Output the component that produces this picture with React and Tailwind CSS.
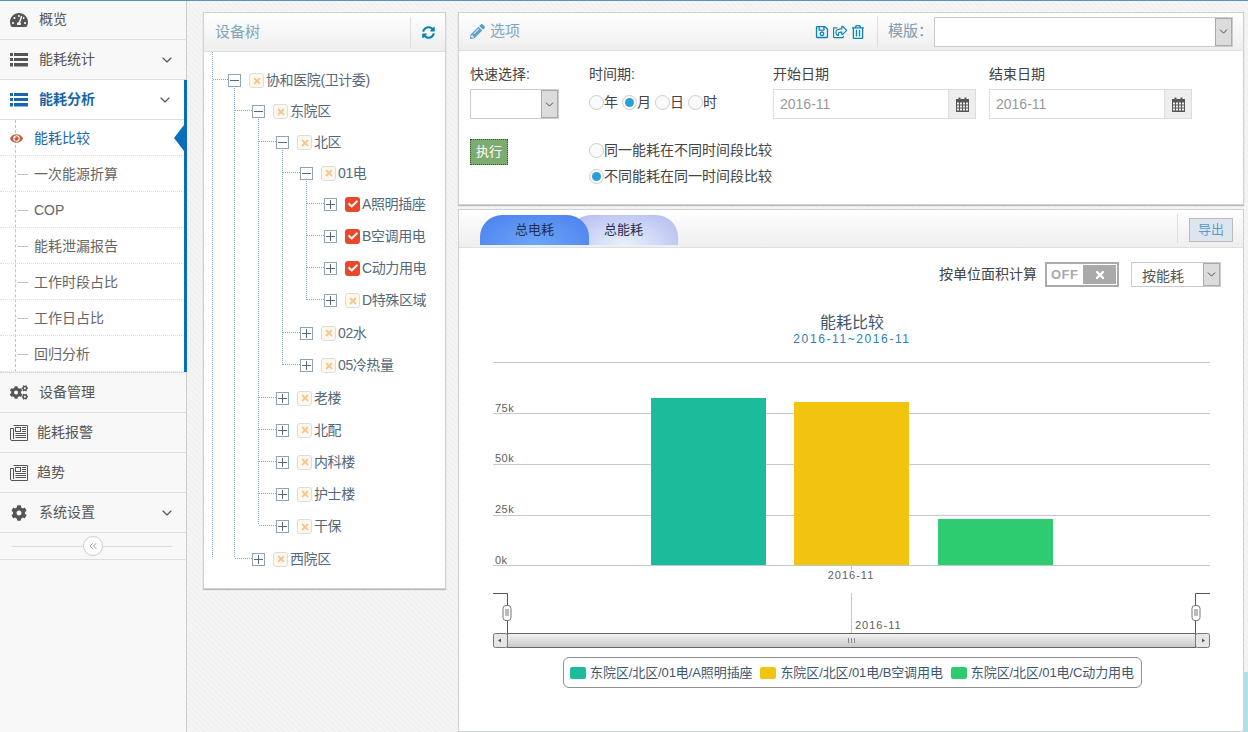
import React from "react";
import {
  FaTachometerAlt, FaCogs, FaCog, FaPencilAlt, FaSyncAlt,
  FaRegSave, FaRegShareSquare, FaRegTrashAlt, FaEye, FaTimes, FaCheck,
} from "react-icons/fa";
import { ChevronDown, ChevronsLeft } from "lucide-react";

const font = "font-['Liberation_Sans','Noto_Sans_CJK_SC',sans-serif]";

function ListIcon() {
  return (
    <svg width="18" height="14" viewBox="0 0 18 14" fill="currentColor">
      <path d="M0 0h3v3H0zM4 0h14v3H4zM0 5h3v3H0zM4 5h14v3H4zM0 10h3v3.5H0zM4 10h14v3.5H4z" />
    </svg>
  );
}

function NewsIcon() {
  return (
    <svg width="18" height="18" viewBox="0 0 18 18" fill="none" stroke="currentColor" strokeWidth="1">
      <path d="M3.5 1.5h14v15H2a1.5 1.5 0 0 1-1.5-1.5V4.5h3V15" />
      <rect x="5.5" y="3.5" width="5" height="4" />
      <path d="M12 3.5h4M12 5.5h4M12 7.5h4M5.5 9.5h10.5M5.5 11.5h10.5M5.5 13.5h10.5" />
    </svg>
  );
}

function CalendarIcon() {
  return (
    <svg width="13" height="15" viewBox="0 0 13 15">
      <path d="M0 2h2.5V0.5h2V2h4V0.5h2V2H13v13H0z" fill="#555" />
      <path d="M1 5.5h2v2H1zM4 5.5h2v2H4zM7 5.5h2v2H7zM10 5.5h2v2h-2zM1 8.5h2v2H1zM4 8.5h2v2H4zM7 8.5h2v2H7zM10 8.5h2v2h-2zM1 11.5h2v2H1zM4 11.5h2v2H4zM7 11.5h2v2H7zM10 11.5h2v2h-2z" fill="#eee" />
    </svg>
  );
}

function NavItem({ icon, label, chevron, active, textClass = "ml-[11px]" }) {
  return (
    <div className={`flex h-10 items-center border-b border-[#ddd] pl-[10px] pr-[11px] ${active ? "bg-white text-[#1a66a8] font-bold" : "text-[#555]"}`}>
      <span className="flex w-[18px] justify-center">{icon}</span>
      <span className={`${textClass} flex-1 text-[14px]`}>{label}</span>
      {chevron && <ChevronDown size={16} strokeWidth={1.75} className="text-[#555]" />}
    </div>
  );
}

function SubItem({ label, active }) {
  return (
    <div className="flex h-9 items-center border-b border-dotted border-[#ddd] pl-[34px] pt-[2px] relative">
      {active ? (
        <FaEye className="absolute left-[10px] text-[13px] text-[#c0603f]" />
      ) : (
        <span className="absolute left-[18px] w-[10px] border-t border-dashed border-[#bbb]" />
      )}
      <span className={`text-[14px] ${active ? "text-[#1a66a8]" : "text-[#666]"}`}>{label}</span>
    </div>
  );
}

function Sidebar() {
  return (
    <aside className="w-[187px] shrink-0 bg-[#f8f8f8] border-r border-[#ccc] h-[733px] -mt-px">
      <NavItem icon={<FaTachometerAlt className="text-[18px]" />} label="概览" />
      <NavItem icon={<ListIcon />} label="能耗统计" chevron />
      <div className="border-r-[3px] border-[#0a6ebd] -mr-px relative">
        <NavItem active icon={<ListIcon />} label="能耗分析" chevron />
        <div className="bg-white relative">
          <span className="absolute left-[15px] top-0 bottom-0 border-l border-dashed border-[#b8c4d0]" />
          <span className="absolute right-0 top-[5px] w-0 h-0 border-y-[13px] border-y-transparent border-r-[10px] border-r-[#0a6ebd]" />
          <SubItem active label="能耗比较" />
          <SubItem label="一次能源折算" />
          <SubItem label="COP" />
          <SubItem label="能耗泄漏报告" />
          <SubItem label="工作时段占比" />
          <SubItem label="工作日占比" />
          <SubItem label="回归分析" />
        </div>
      </div>
      <div className="border-t border-[#ddd]">
        <NavItem icon={<FaCogs className="text-[19px]" />} label="设备管理" />
        <NavItem icon={<NewsIcon />} label="能耗报警" textClass="ml-[9px]" />
        <NavItem icon={<NewsIcon />} label="趋势" textClass="ml-[9px]" />
        <NavItem icon={<FaCog className="text-[16px]" />} label="系统设置" chevron />
      </div>
      <div className="relative flex h-[27px] items-center justify-center border-b border-[#ddd]">
        <span className="absolute left-3 right-[14px] border-t border-[#ddd]" />
        <span className="relative flex h-5 w-5 items-center justify-center rounded-full border border-[#ccc] bg-white text-[#999]">
          <ChevronsLeft size={12} />
        </span>
      </div>
    </aside>
  );
}

const treeRows = [
  { d: 0, t: "协和医院(卫计委)", open: true, h: "h-[31px]" },
  { d: 1, t: "东院区", open: true, h: "h-[31px]" },
  { d: 2, t: "北区", open: true, h: "h-[31px]" },
  { d: 3, t: "01电", open: true, h: "h-[30px]" },
  { d: 4, t: "A照明插座", c: true, h: "h-[32px]" },
  { d: 4, t: "B空调用电", c: true, h: "h-[32px]" },
  { d: 4, t: "C动力用电", c: true, h: "h-[32px]" },
  { d: 4, t: "D特殊区域", h: "h-[33px]" },
  { d: 3, t: "02水", h: "h-[32px]" },
  { d: 3, t: "05冷热量", h: "h-[33px]" },
  { d: 2, t: "老楼", h: "h-[32px]" },
  { d: 2, t: "北配", h: "h-[32px]" },
  { d: 2, t: "内科楼", h: "h-[32px]" },
  { d: 2, t: "护士楼", h: "h-[32px]" },
  { d: 2, t: "干保", h: "h-[33px]" },
  { d: 1, t: "西院区", h: "h-[32px]" },
];
const indent = ["pl-[24px]", "pl-[48px]", "pl-[72px]", "pl-[96px]", "pl-[120px]"];

function TreeRow({ r }) {
  return (
    <div className={`flex items-center ${r.h} ${indent[r.d]}`}>
      <span className="relative z-10 h-[13px] w-[13px] shrink-0 border border-[#8fa3b0] bg-white flex items-center justify-center">
        <span className="absolute w-[9px] border-t border-[#54697a]" />
        {!r.open && <span className="absolute h-[9px] border-l border-[#54697a]" />}
      </span>
      {r.c ? (
        <span className="ml-[8px] flex h-[15px] w-[15px] shrink-0 items-center justify-center rounded-[3px] bg-[#e8492a] text-white">
          <FaCheck className="text-[10px]" />
        </span>
      ) : (
        <span className="ml-[8px] flex h-[15px] w-[15px] shrink-0 items-center justify-center rounded-[3px] border border-[#dcdcdc] bg-[#fff8ee] text-[#f5c48a]">
          <FaTimes className="text-[10px]" />
        </span>
      )}
      <span className="ml-[2px] whitespace-nowrap text-[14px] tracking-[-0.4px] text-[#54697a]">{r.t}</span>
    </div>
  );
}

function TreeLines() {
  const stroke = "#7ea6c4";
  const V = ([x, a, b]) => <line key={`v${x}`} x1={x} x2={x} y1={a} y2={b} stroke={stroke} strokeDasharray="1 1" />;
  const H = ([x, y, b], i) => <line key={`h${i}`} x1={x} x2={b} y1={y} y2={y} stroke={stroke} strokeDasharray="1 1" />;
  const ox = 204, oy = 52;
  return (
    <svg className="absolute left-0 top-0" width="240" height="520" viewBox={`${ox} ${oy} 240 520`}>
      {[[212.5, 52, 558], [234.5, 86, 558], [258.5, 117, 525], [282.5, 148, 365], [306.5, 179, 300]].map(V)}
      {[[213, 79.5, 228], [235, 110.5, 252], [259, 141.5, 276], [283, 172.5, 300], [307, 203.5, 324], [307, 235.5, 324], [307, 267.5, 324], [307, 299.5, 324], [283, 332.5, 300], [283, 364.5, 300], [259, 397.5, 276], [259, 429.5, 276], [259, 461.5, 276], [259, 493.5, 276], [259, 525.5, 276], [235, 558.5, 252]].map(H)}
    </svg>
  );
}

function TreePanel() {
  return (
    <section className="ml-[16px] mt-[11px] h-[577px] w-[243px] shrink-0 border border-[#ccd2d6] bg-white shadow-[0_1px_1px_#bbb]">
      <div className="flex h-[39px] items-center justify-between border-b border-[#e0e0e0] bg-gradient-to-b from-white to-[#eeeeee]">
        <span className="ml-[11px] text-[15px] text-[#7fa6c2]">设备树</span>
        <span className="flex h-[31px] w-[35px] items-center justify-center border-l border-[#ddd] text-[#0a83b8]">
          <FaSyncAlt className="text-[13px]" />
        </span>
      </div>
      <div className="relative pt-[13px] h-[537px]">
        <TreeLines />
        <div className="relative">
          {treeRows.map((r, i) => <TreeRow key={i} r={r} />)}
        </div>
      </div>
    </section>
  );
}

function Radio({ on }) {
  return (
    <span className="flex h-[15px] w-[15px] shrink-0 items-center justify-center rounded-full border border-[#ccc] bg-[#fafafa]">
      {on && <span className="h-[9px] w-[9px] rounded-full bg-[#2a9fd6]" />}
    </span>
  );
}

function SelectBox({ w, h = "h-[30px]", label }) {
  return (
    <div className={`flex ${w} ${h} border border-[#ccc] bg-white`}>
      <div className="flex flex-1 items-center pl-[10px] pt-[3px] text-[14px] text-[#555]">{label}</div>
      <div className="flex w-[17px] items-center justify-center border border-[#aaa] bg-[#dcdcdc] text-[#444]">
        <ChevronDown size={13} strokeWidth={1.75} />
      </div>
    </div>
  );
}

function DateField({ w }) {
  return (
    <div className={`flex ${w} h-[30px] border border-[#ddd] bg-white`}>
      <div className="flex flex-1 items-center pl-[6px] text-[14px] text-[#999]">2016-11</div>
      <div className="flex w-[27px] items-center justify-center border-l border-[#ddd] bg-[#eeeeee]">
        <CalendarIcon />
      </div>
    </div>
  );
}

function OptionsPanel() {
  return (
    <section className="h-[193px] border border-[#ccd2d6] bg-white shadow-[0_1px_1px_#bbb]">
      <div className="flex h-[38px] items-center border-b border-[#e0e0e0] bg-gradient-to-b from-white to-[#eeeeee] pl-[11px]">
        <FaPencilAlt className="text-[15px] text-[#5f9fc9]" />
        <span className="ml-[5px] text-[15px] text-[#7fa6c2]">选项</span>
        <div className="ml-auto flex items-center gap-[4px] text-[#0a83b8] text-[14px]">
          <FaRegSave /><FaRegShareSquare /><FaRegTrashAlt />
        </div>
        <span className="ml-[12px] h-[31px] border-l border-[#ddd]" />
        <span className="ml-[10px] w-[46px] text-[15px] text-[#7f9bb0]">模版：</span>
        <div className="mr-[10px]"><SelectBox w="w-[299px]" /></div>
      </div>
      <div className="pl-[11px]">
        <div className="flex pt-[13px]">
          <div className="w-[119px]">
            <div className="mb-[5px] text-[14px] leading-[20px] text-[#444]">快速选择:</div>
            <SelectBox w="w-[89px]" />
          </div>
          <div className="w-[184px]">
            <div className="mb-[8px] text-[14px] leading-[20px] text-[#444]">时间期:</div>
            <div className="flex items-center text-[14px] text-[#444]">
              <Radio /><span className="w-[18px]">年</span>
              <Radio on /><span className="w-[18px]">月</span>
              <Radio /><span className="w-[18px]">日</span>
              <Radio /><span>时</span>
            </div>
          </div>
          <div className="w-[216px]">
            <div className="mb-[5px] text-[14px] leading-[20px] text-[#444]">开始日期</div>
            <DateField w="w-[203px]" />
          </div>
          <div>
            <div className="mb-[5px] text-[14px] leading-[20px] text-[#444]">结束日期</div>
            <DateField w="w-[203px]" />
          </div>
        </div>
        <div className="flex pt-[20px]">
          <div className="w-[119px]">
            <div className="flex h-[26px] w-[38px] items-center justify-center border border-dotted border-[#2d5a2d] bg-[#7dac73] text-[13px] text-white">执行</div>
          </div>
          <div className="flex flex-col gap-[10px] pt-[3px] text-[14px] text-[#444]">
            <div className="flex h-[16px] items-center"><Radio /><span>同一能耗在不同时间段比较</span></div>
            <div className="flex h-[16px] items-center"><Radio on /><span>不同能耗在同一时间段比较</span></div>
          </div>
        </div>
      </div>
    </section>
  );
}

function Chart() {
  const gf = "'Liberation Sans','Noto Sans CJK SC',sans-serif";
  return (
    <svg className="block" width="784" height="346" viewBox="459 305 784 346" fontFamily={gf}>
      <text x="852" y="328" textAnchor="middle" fontSize="16" fill="#3e576f">能耗比较</text>
      <text x="852" y="343" textAnchor="middle" fontSize="12" letterSpacing="1.6" fill="#2a80b9">2016-11~2016-11</text>
      {[362, 413, 464, 515].map((y) => <line key={y} x1="493" x2="1210" y1={y + 0.5} y2={y + 0.5} stroke="#c8c8c8" />)}
      <line x1="493" x2="1210" y1="565.5" y2="565.5" stroke="#c0c8d0" />
      {[["75k", 412], ["50k", 462], ["25k", 513], ["0k", 564]].map(([t, y]) => (
        <text key={t} x="495" y={y} fontSize="11" letterSpacing="0.5" fill="#606060">{t}</text>
      ))}
      <rect x="651" y="398" width="115" height="167" fill="#1abc9c" />
      <rect x="794" y="402" width="115" height="163" fill="#f1c40f" />
      <rect x="938" y="519" width="115" height="46" fill="#2ecc71" />
      <line x1="851.5" x2="851.5" y1="565" y2="570" stroke="#c0c8d0" />
      <text x="851" y="579" textAnchor="middle" fontSize="11" letterSpacing="1" fill="#606060">2016-11</text>

      <line x1="851.5" x2="851.5" y1="593" y2="633" stroke="#c8c8c8" />
      <text x="855" y="629" fontSize="11" letterSpacing="1" fill="#606060">2016-11</text>

      <path d="M493 593.5H507.5V633M1210 593.5H1195.5V633" fill="none" stroke="#555" />
      <rect x="503" y="605.5" width="8" height="15" rx="3" fill="#fff" stroke="#777" />
      <path d="M506 609v7M508 609v7" stroke="#777" />
      <rect x="1192" y="605.5" width="8" height="15" rx="3" fill="#fff" stroke="#777" />
      <path d="M1195 609v7M1197 609v7" stroke="#777" />

      <defs>
        <linearGradient id="sb" x1="0" x2="0" y1="0" y2="1">
          <stop offset="0" stopColor="#f4f4f4" />
          <stop offset="1" stopColor="#c8c8c8" />
        </linearGradient>
      </defs>
      <rect x="507.5" y="633.5" width="688" height="14" fill="url(#sb)" stroke="#666" />
      <rect x="493.5" y="633.5" width="14" height="14" rx="2" fill="#e6e6e6" stroke="#777" />
      <rect x="1195.5" y="633.5" width="14" height="14" rx="2" fill="#e6e6e6" stroke="#777" />
      <path d="M501 638.5v4l-3-2zM1202 638.5v4l3-2z" fill="#555" />
      <path d="M848.5 638v5M851.5 638v5M854.5 638v5" stroke="#888" />
    </svg>
  );
}

function LegendItem({ color, label }) {
  return (
    <div className="flex items-center">
      <span className={`h-[12px] w-[16px] rounded-[2px] ${color}`} />
      <span className="ml-[4px] whitespace-nowrap text-[13px] tracking-[-0.1px] text-[#3e576f]">{label}</span>
    </div>
  );
}

function ChartPanel() {
  return (
    <section className="mt-[4px] h-[523px] border border-[#ccd2d6] bg-white">
      <div className="flex h-[38px] border-b border-[#e0e0e0] bg-gradient-to-b from-white to-[#eeeeee] pl-[21px]">
        <div className="mt-[5px] relative z-10 flex h-[30px] w-[109px] items-center justify-center rounded-t-[22px] bg-[radial-gradient(ellipse_at_center_bottom,#6ea6f7,#4a80ee)] text-[13px] text-[#1f2f50]">总电耗</div>
        <div className="-ml-[20px] mt-[5px] flex h-[30px] w-[109px] items-center justify-center rounded-t-[22px] bg-[radial-gradient(ellipse_at_center_bottom,#e8f2fb,#b0b8f0)] text-[13px] text-[#1f2f50]">总能耗</div>
        <span className="ml-auto mt-[4px] h-[29px] border-l border-[#ddd]" />
        <div className="ml-[11px] mr-[10px] mt-[8px] flex h-[24px] w-[44px] items-center justify-center border border-[#bbb] bg-[#dde6ee] text-[13px] text-[#5b9bc8]">导出</div>
      </div>
      <div className="flex h-[57px] items-start justify-end pr-[22px] pt-[14px]">
        <span className="mt-[2px] text-[14px] leading-[20px] text-[#444]">按单位面积计算</span>
        <div className="ml-[8px] flex h-[25px] w-[74px] border-2 border-[#aaa] bg-white p-px">
          <span className="flex-1 pl-[3px] text-[13px] font-bold leading-[19px] tracking-[0.5px] text-[#aaa]">OFF</span>
          <span className="flex w-[33px] items-center justify-center bg-[#aaa] text-white"><FaTimes className="text-[12px]" /></span>
        </div>
        <div className="ml-[12px]"><SelectBox w="w-[90px]" h="h-[25px]" label="按能耗" /></div>
      </div>
      <Chart />
      <div className="mt-[6px] flex justify-center pl-[2px]">
        <div className="flex h-[31px] w-[579px] items-center justify-center gap-[8px] rounded-[6px] border border-[#909090] bg-white">
          <LegendItem color="bg-[#1abc9c]" label="东院区/北区/01电/A照明插座" />
          <LegendItem color="bg-[#f1c40f]" label="东院区/北区/01电/B空调用电" />
          <LegendItem color="bg-[#2ecc71]" label="东院区/北区/01电/C动力用电" />
        </div>
      </div>
    </section>
  );
}

export default function App() {
  return (
    <div className={`${font} relative h-[732px] w-full overflow-hidden border-t border-[#5b93b5] bg-[repeating-linear-gradient(45deg,#f1f1f1_0,#f1f1f1_2px,#f5f5f5_2px,#f5f5f5_4px)]`}>
      <div className="flex h-full">
        <Sidebar />
        <TreePanel />
        <main className="ml-[12px] mt-[11px] w-[786px] shrink-0">
          <OptionsPanel />
          <ChartPanel />
        </main>
      </div>
      <span className="absolute bottom-0 right-0 h-[60px] w-[4px] bg-[#b0e0e6]" />
    </div>
  );
}
